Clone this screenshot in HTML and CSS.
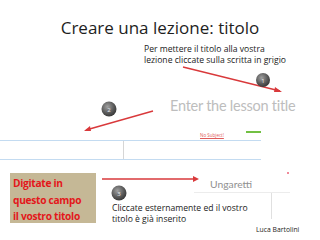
FILE: index.html
```html
<!DOCTYPE html>
<html>
<head>
<meta charset="utf-8">
<link rel="stylesheet" href="styles.css">
</head>
<body>
<div class="slide">
  <h1 class="title">Creare una lezione: titolo</h1>
  <p class="note note-top">Per mettere il titolo alla vostra<br>lezione cliccate sulla scritta in grigio</p>
  <div class="lesson-title">Enter the lesson title</div>
  <div class="no-subject">No Subject!</div>
  <div class="green-bar"></div>
  <div class="blue-row"><div class="cell"></div></div>
  <div class="pink-dot"></div>
  <div class="tan-box">Digitate in<br>questo campo<br>il vostro titolo</div>
  <div class="field">Ungaretti</div>
  <div class="field-line"></div>
  <div class="field-vline"></div>
  <p class="note note-bottom">Cliccate esternamente ed il vostro<br>titolo è già inserito</p>
  <div class="author">Luca Bartolini</div>
  <svg class="overlay" width="320" height="240" viewBox="0 0 320 240">
    <defs>
      <radialGradient id="ball" cx="0.4" cy="0.35" r="0.7">
        <stop offset="0" stop-color="#a0a0a0"/>
        <stop offset="0.6" stop-color="#5a5a5a"/>
        <stop offset="1" stop-color="#333"/>
      </radialGradient>
    </defs>
    <g stroke="#d9393b" stroke-width="1.3" fill="none">
      <line x1="183" y1="67" x2="280" y2="91"/>
      <line x1="153" y1="111" x2="86" y2="130"/>
      <line x1="102" y1="179" x2="196" y2="179"/>
    </g>
    <g fill="#d9393b">
      <polygon points="282,92 275,87 274,92"/>
      <polygon points="84,131 90,126 91,131"/>
      <polygon points="199,179 193,176 193,182"/>
    </g>
    <g>
      <circle cx="263" cy="80" r="7" fill="url(#ball)"/>
      <text x="263" y="82.5" class="num">1</text>
      <circle cx="109" cy="109" r="7.5" fill="url(#ball)"/>
      <text x="109" y="111.5" class="num">2</text>
      <circle cx="119" cy="193" r="7.5" fill="url(#ball)"/>
      <text x="119" y="195.5" class="num">3</text>
    </g>
  </svg>
</div>
</body>
</html>
```
FILE: styles.css
```css
html, body {
  margin: 0;
  padding: 0;
  background: #fff;
}
.slide {
  position: relative;
  width: 320px;
  height: 240px;
  overflow: hidden;
  font-family: "Open Sans", "Liberation Sans", sans-serif;
}
.title {
  margin: 0;
  padding-top: 17px;
  text-align: center;
  font-weight: 400;
  font-size: 17px;
  line-height: 22px;
  color: #1e1e1e;
}
.note {
  position: absolute;
  margin: 0;
  font-size: 8.6px;
  line-height: 11px;
  color: #1a1a1a;
  white-space: nowrap;
}
.note-top { left: 144px; top: 44px; }
.note-bottom { left: 112px; top: 203px; }
.lesson-title {
  position: absolute;
  left: 170px;
  top: 97px;
  font-family: Lato, "Open Sans", sans-serif;
  font-size: 14.5px;
  letter-spacing: -0.25px;
  line-height: 18px;
  color: #bdbdbd;
  white-space: nowrap;
}
.no-subject {
  position: absolute;
  left: 200px;
  top: 132px;
  font-size: 4.5px;
  line-height: 6px;
  color: #e05a5a;
  text-decoration: underline;
  white-space: nowrap;
}
.green-bar {
  position: absolute;
  left: 246px;
  top: 131px;
  width: 15px;
  height: 2px;
  background: #72c043;
}
.blue-row {
  position: absolute;
  left: 0;
  top: 140px;
  width: 261px;
  height: 18px;
  border-top: 1px solid #c3dbf1;
  border-bottom: 1px solid #c3dbf1;
}
.cell {
  width: 123px;
  height: 100%;
  border-right: 1px solid #d6d6d6;
}
.pink-dot {
  position: absolute;
  left: 287px;
  top: 172px;
  width: 2px;
  height: 2px;
  background: #f08a9a;
}
.tan-box {
  position: absolute;
  left: 10px;
  top: 173px;
  width: 83px;
  height: 48px;
  padding: 2px 0 0 3px;
  background: #c5b896;
  color: #e3171b;
  font-weight: 700;
  font-size: 10.2px;
  letter-spacing: -0.3px;
  line-height: 16.5px;
  white-space: nowrap;
}
.field {
  position: absolute;
  left: 210px;
  top: 178px;
  font-family: Lato, "Open Sans", sans-serif;
  font-size: 10.3px;
  line-height: 13px;
  color: #909090;
}
.field-line {
  position: absolute;
  left: 194px;
  top: 192px;
  width: 96px;
  height: 1px;
  background: #ececec;
}
.field-vline {
  position: absolute;
  left: 271px;
  top: 193px;
  width: 1px;
  height: 26px;
  background: #e0e0e0;
}
.author {
  position: absolute;
  left: 256px;
  top: 225px;
  font-size: 6.8px;
  line-height: 9px;
  color: #222;
  white-space: nowrap;
}
.overlay {
  position: absolute;
  left: 0;
  top: 0;
}
.num {
  font-family: "Open Sans", sans-serif;
  font-size: 6px;
  fill: #eee;
  text-anchor: middle;
}
```
